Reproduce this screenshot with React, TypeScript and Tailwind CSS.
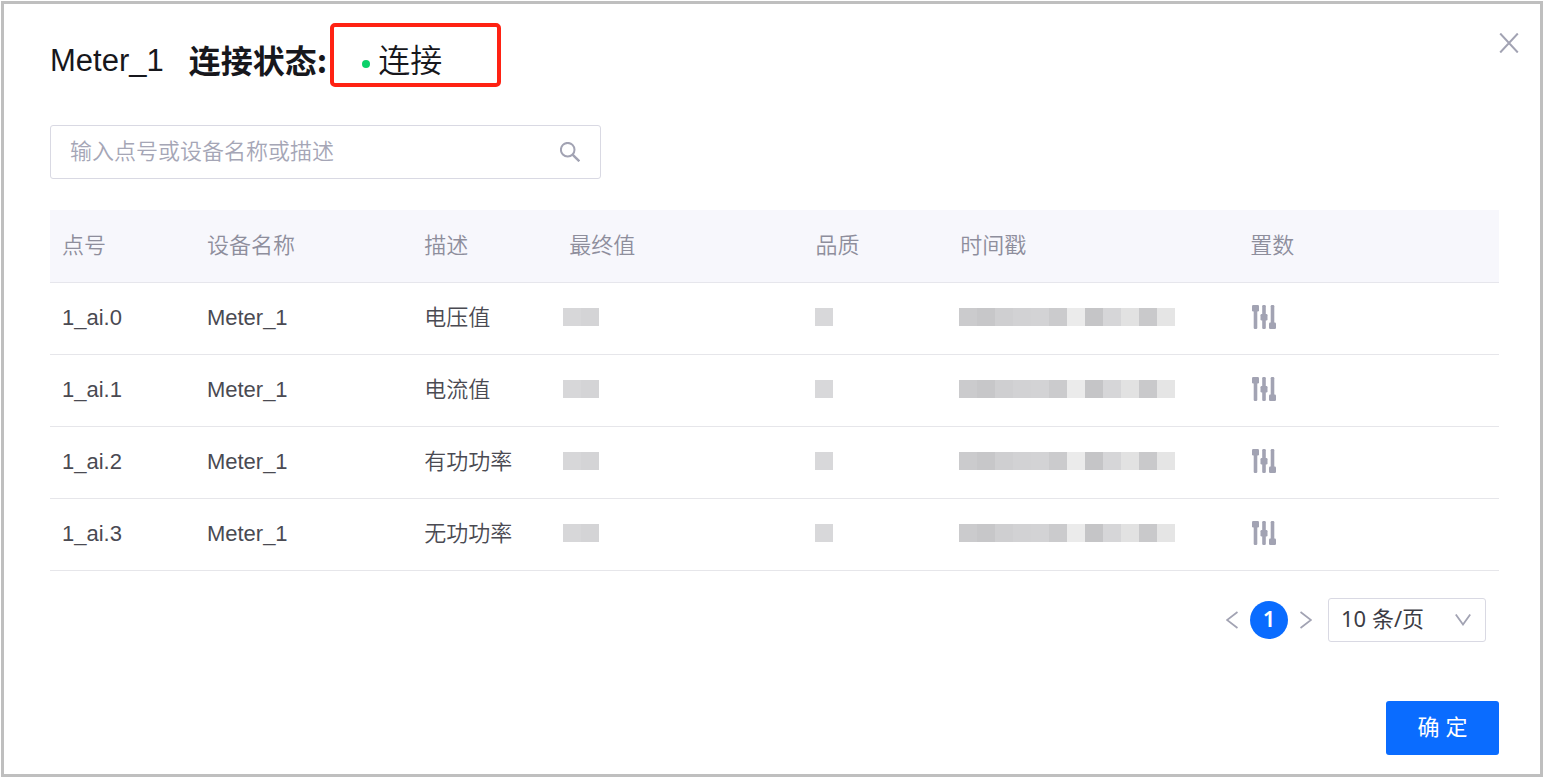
import React, { useState } from 'react';

interface Point {
  id: string;
  device: string;
  description: string;
}

const POINTS: Point[] = [
  { id: '1_ai.0', device: 'Meter_1', description: '电压值' },
  { id: '1_ai.1', device: 'Meter_1', description: '电流值' },
  { id: '1_ai.2', device: 'Meter_1', description: '有功功率' },
  { id: '1_ai.3', device: 'Meter_1', description: '无功功率' },
];

const COLUMNS = [
  { title: '点号', width: 'w-[10%]' },
  { title: '设备名称', width: 'w-[15%]' },
  { title: '描述', width: 'w-[10%]' },
  { title: '最终值', width: 'w-[17%]' },
  { title: '品质', width: 'w-[10%]' },
  { title: '时间戳', width: 'w-[20%]' },
  { title: '置数', width: 'w-[18%]' },
];

// Masked cells, one shade per block
const VALUE_MASK = ['bg-[#d7d7d9]', 'bg-[#d4d4d6]'];
const QUALITY_MASK = ['bg-[#d8d8da]'];
const TIME_MASK = [
  'bg-[#cbcbcd]',
  'bg-[#c7c7c9]',
  'bg-[#cfcfd1]',
  'bg-[#d2d2d4]',
  'bg-[#d3d3d5]',
  'bg-[#cbcbcd]',
  'bg-[#ebebeb]',
  'bg-[#c5c5c7]',
  'bg-[#d6d6d8]',
  'bg-[#e2e2e2]',
  'bg-[#c9c9cb]',
  'bg-[#e5e5e5]',
];

const Mask: React.FC<{ shades: string[] }> = ({ shades }) => (
  <div className="flex">
    {shades.map((shade, i) => (
      <span key={i} className={`h-[18px] w-[18px] ${shade}`} />
    ))}
  </div>
);

const SlidersIcon = () => (
  <svg className="h-6 w-6" viewBox="0 0 24 24" fill="#a2a3b3">
    <rect x="0" y="0" width="7" height="6.5" rx="1.2" />
    <rect x="1.7" y="0" width="3.6" height="24" rx="1.2" />
    <rect x="10.2" y="0" width="3.6" height="24" rx="1.2" />
    <rect x="8.5" y="9" width="7" height="6.5" rx="1.2" />
    <rect x="18.7" y="0" width="3.6" height="24" rx="1.2" />
    <rect x="17" y="17.5" width="7" height="6.5" rx="1.2" />
  </svg>
);

const App: React.FC = () => {
  const [query, setQuery] = useState('');
  const [pageSize, setPageSize] = useState('10');

  const rows = POINTS.filter(p =>
    [p.id, p.device, p.description].some(text => text.includes(query))
  );

  return (
    <div className="flex min-h-screen bg-white px-px pt-px font-['Liberation_Sans','Noto_Sans_CJK_SC',sans-serif] text-[22px] leading-8 font-[350] text-[#4a4a52]">
      <main className="flex flex-1 flex-col border-3 border-[#bfbfbf] pr-[41px] pb-[19px] pl-[46px]">
        <header className="flex items-start justify-between pt-[19px]">
          <h1 className="flex h-16 items-center text-[32px] leading-10 font-[350] text-[#17171c]">
            <span className="pt-3 text-[31px]">Meter_1</span>
            <span className="ml-[25px] pt-2 font-['Noto_Sans_CJK_SC',sans-serif] font-bold">连接状态:</span>
            <span className="ml-[3px] flex h-16 w-[171px] items-center rounded-[5px] border-4 border-[#ff2213] pt-3 pl-7">
              <span className="mt-1.5 mr-2 h-2 w-2 rounded-full bg-[#0bd16a]" />
              连接
            </span>
          </h1>
          <button type="button" aria-label="关闭" className="mt-2.5 -mr-5 cursor-pointer">
            <svg className="h-5 w-5" viewBox="0 0 20 20" fill="none" stroke="#a2a3b3" strokeWidth="2">
              <path d="M1.2 0.5L18.8 19.5M18.8 0.5L1.2 19.5" />
            </svg>
          </button>
        </header>

        <label className="mt-[38px] flex h-[54px] w-[551px] max-w-full items-center rounded-[3px] border border-[#d9d9e3] pr-5 pl-[19px]">
          <input
            className="min-w-0 flex-1 bg-transparent outline-none placeholder:text-[#a5a6b6]"
            aria-label="搜索"
            placeholder="输入点号或设备名称或描述"
            value={query}
            onChange={e => setQuery(e.target.value)}
          />
          <svg className="h-5 w-5" viewBox="0 0 20 20" fill="none" stroke="#a2a3b3" strokeWidth="2">
            <circle cx="7.7" cy="7.7" r="6.8" />
            <path d="M12.6 12.6L19.3 19.3" strokeWidth="2.4" />
          </svg>
        </label>

        <table className="mt-[31px] w-full table-fixed border-separate border-spacing-0 text-left">
          <thead>
            <tr className="bg-[#f7f7fc] text-[#8e8e9c]">
              {COLUMNS.map(col => (
                <th key={col.title} className={`h-[73px] border-b border-[#e6e6ec] px-3 font-[350] ${col.width}`}>
                  {col.title}
                </th>
              ))}
            </tr>
          </thead>
          <tbody>
            {rows.map(point => (
              <tr key={point.id}>
                <td className="h-[72px] border-b border-[#e6e6ea] px-3 pb-0.5">{point.id}</td>
                <td className="border-b border-[#e6e6ea] px-3 pb-0.5">{point.device}</td>
                <td className="border-b border-[#e6e6ea] px-3 pb-0.5">{point.description}</td>
                <td className="border-b border-[#e6e6ea] px-1.5 pb-1">
                  <Mask shades={VALUE_MASK} />
                </td>
                <td className="border-b border-[#e6e6ea] px-3 pb-1">
                  <Mask shades={QUALITY_MASK} />
                </td>
                <td className="border-b border-[#e6e6ea] px-[11px] pb-1">
                  <Mask shades={TIME_MASK} />
                </td>
                <td className="border-b border-[#e6e6ea] px-3.5 pb-1">
                  <button type="button" aria-label="置数" className="block cursor-pointer">
                    <SlidersIcon />
                  </button>
                </td>
              </tr>
            ))}
          </tbody>
        </table>

        <nav className="mt-[27px] flex items-center justify-end gap-3 pr-[13px]">
          <button type="button" aria-label="上一页" className="cursor-pointer">
            <svg className="h-[18px] w-3" viewBox="0 0 12 18" fill="none" stroke="#a2a3b3" strokeWidth="1.8">
              <path d="M11.5 1L1 9L11.5 17" />
            </svg>
          </button>
          <button
            type="button"
            className="h-[38px] w-[38px] cursor-pointer rounded-full bg-[#0a6cff] pb-1 font-['Noto_Sans',sans-serif] font-semibold text-white"
          >
            1
          </button>
          <button type="button" aria-label="下一页" className="cursor-pointer">
            <svg className="h-[18px] w-3" viewBox="0 0 12 18" fill="none" stroke="#a2a3b3" strokeWidth="1.8">
              <path d="M0.5 1L11 9L0.5 17" />
            </svg>
          </button>
          <div className="relative ml-1">
            <select
              aria-label="每页条数"
              className="h-11 w-[158px] appearance-none rounded-[3px] border border-[#d9d9e3] bg-white pb-1 pl-3 font-['Noto_Sans','Noto_Sans_CJK_SC',sans-serif] font-normal text-[#3c3c44]"
              value={pageSize}
              onChange={e => setPageSize(e.target.value)}
            >
              <option value="10">10 条/页</option>
              <option value="20">20 条/页</option>
              <option value="50">50 条/页</option>
            </select>
            <svg
              className="pointer-events-none absolute top-4 right-[15px] h-3 w-4"
              viewBox="0 0 16 12"
              fill="none"
              stroke="#a2a3b3"
              strokeWidth="1.8"
            >
              <path d="M0.8 0.5L8 10.5L15.2 0.5" />
            </svg>
          </div>
        </nav>

        <footer className="mt-auto flex justify-end">
          <button
            type="button"
            className="h-[54px] w-[113px] cursor-pointer rounded-[3px] bg-[#0a6cff] font-normal text-white"
          >
            确 定
          </button>
        </footer>
      </main>
    </div>
  );
};

export default App;
